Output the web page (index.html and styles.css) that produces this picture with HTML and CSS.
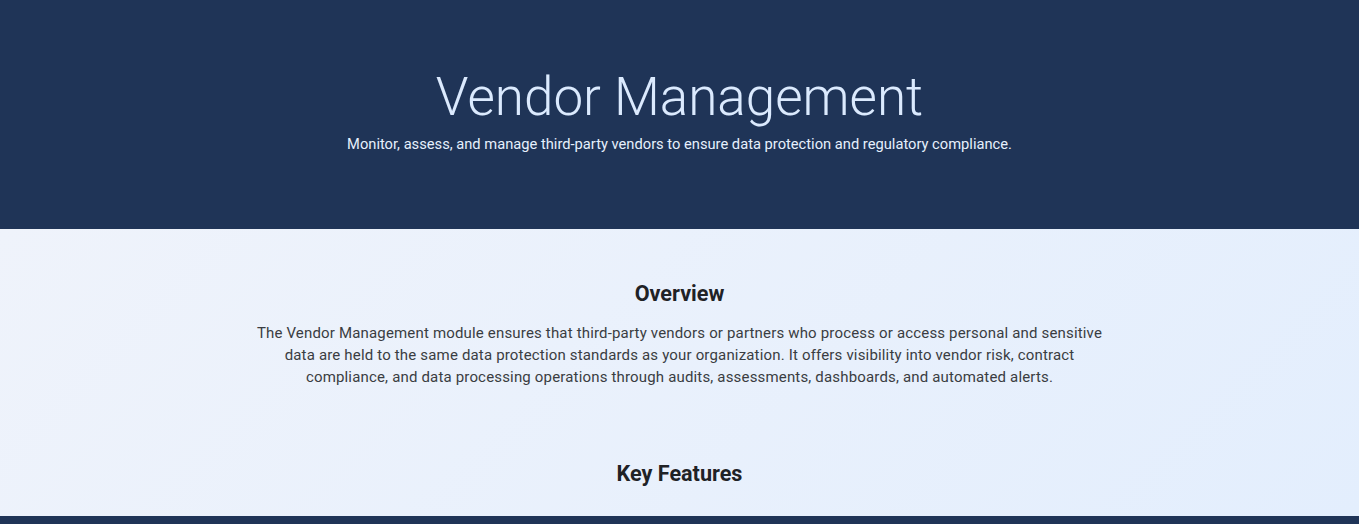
FILE: index.html
```html
<!DOCTYPE html>
<html lang="en">
<head>
<meta charset="utf-8">
<title>Vendor Management</title>
<link rel="stylesheet" href="styles.css">
</head>
<body>
<header class="hero">
  <h1 class="hero-title">Vendor Management</h1>
  <p class="hero-sub">Monitor, assess, and manage third-party vendors to ensure data protection and regulatory compliance.</p>
</header>
<main class="content">
  <section class="block">
    <h2 class="block-title">Overview</h2>
    <p class="block-text">The Vendor Management module ensures that third-party vendors or partners who process or access personal and sensitive data are held to the same data protection standards as your organization. It offers visibility into vendor risk, contract compliance, and data processing operations through audits, assessments, dashboards, and automated alerts.</p>
  </section>
  <section class="block features">
    <h2 class="block-title">Key Features</h2>
  </section>
</main>
<div class="band"></div>
</body>
</html>
```
FILE: styles.css
```css
html, body {
  margin: 0;
  padding: 0;
}
::-webkit-scrollbar {
  width: 8px;
}
::-webkit-scrollbar-track {
  background: #fbfbfb;
}
::-webkit-scrollbar-thumb {
  background: #8a8a8a;
  border-left: 3px solid #fbfbfb;
  border-radius: 0 0 2px 2px;
}
body {
  font-family: Roboto, "Liberation Sans", Arial, sans-serif;
  color: #1f2937;
}
.hero {
  background: #1f3457;
  height: 229px;
  box-sizing: border-box;
  padding-top: 65px;
  text-align: center;
}
.hero-title {
  margin: 0;
  font-size: 53px;
  font-weight: 300;
  line-height: 64px;
  color: #dbeafe;
}
.hero-sub {
  margin: 4px 0 0;
  font-size: 14.7px;
  line-height: 22px;
  color: #e6f0fd;
}
.content {
  background: linear-gradient(135deg, #eff3fb 0%, #e3eefd 100%);
  padding: 50px 0 27px;
}
.block {
  max-width: 860px;
  margin: 0 auto;
  text-align: center;
}
.block-title {
  margin: 0;
  font-size: 21.6px;
  font-weight: 700;
  line-height: 30px;
  color: #1f2226;
}
.block-text {
  margin: 13px 0 0;
  font-size: 15px;
  line-height: 22px;
  letter-spacing: 0.17px;
  color: #3a3d42;
}
.features {
  margin-top: 71px;
}
.band {
  background: #1f3457;
  height: 222px;
}
```
